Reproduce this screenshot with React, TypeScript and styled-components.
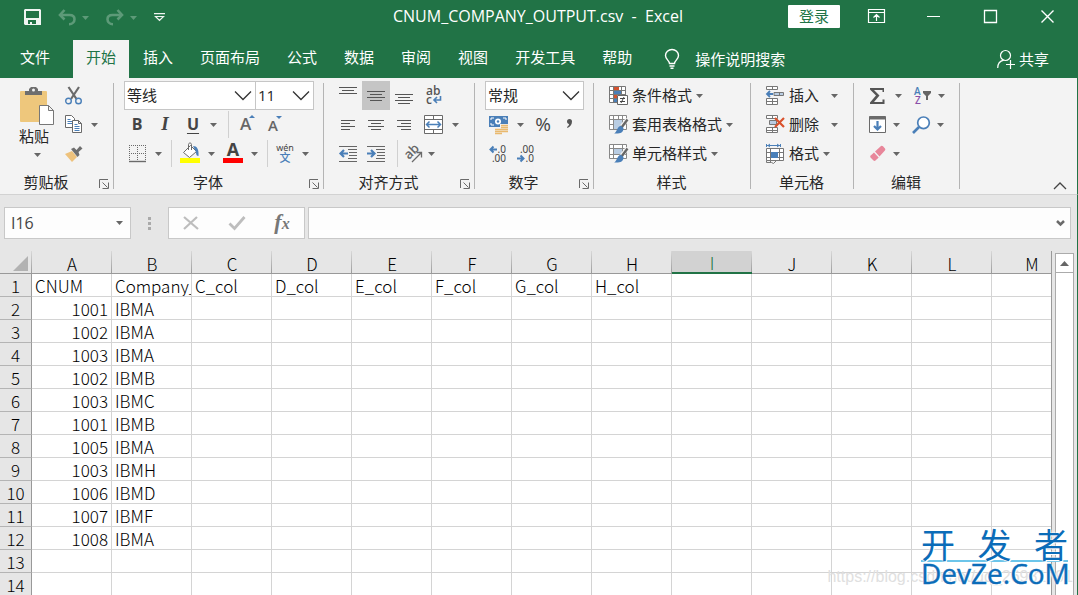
import React from "react";
import styled, { createGlobalStyle, css } from "styled-components";

const GREEN = "#217346";
const INK = "#262626";
const GREY = "#6a6a6a";
const BLUE = "#4a7fb8";

const Global = createGlobalStyle`
  * { box-sizing: border-box; }
  html, body, #root { height: 100%; }
  body {
    margin: 0;
    overflow: hidden;
    font: 15px/20px "Open Sans", "Noto Sans CJK SC", sans-serif;
    color: ${INK};
  }
  button, input, select { font: inherit; color: inherit; margin: 0; }
  button { border: 0; padding: 0; background: none; cursor: pointer; }
  svg { display: block; flex: none; overflow: visible; }
`;

const Window = styled.div`
  height: 100%;
  display: flex;
  flex-direction: column;
  background: #e6e6e6;
  overflow: hidden;
`;

/* ---------- title bar ---------- */

const TitleBar = styled.header`
  height: 40px;
  padding: 0 2px 8px 0;
  display: grid;
  grid-template-columns: 1fr auto 1fr;
  align-items: center;
  background: ${GREEN};
  color: #fff;
`;

const QuickAccess = styled.div`
  display: flex;
  align-items: center;
  gap: 17px;
  padding: 3px 0 0 24px;
`;

const QuickButton = styled.button<{ $dim?: boolean }>`
  display: flex;
  align-items: center;
  gap: 6px;
  color: ${(p) => (p.$dim ? "#5d9a78" : "#f0f5f2")};
`;

const Title = styled.h1`
  margin: 0;
  font-size: 16px;
  line-height: 32px;
  font-weight: 400;
  white-space: pre;
`;

const WindowControls = styled.div`
  display: flex;
  justify-content: flex-end;
  align-items: center;
`;

const Login = styled.button`
  width: 52px;
  height: 23px;
  margin-right: 8px;
  background: #fff;
  color: ${GREEN};
  border-radius: 1px;
  line-height: 22px;
`;

const WindowButton = styled.button`
  width: 57px;
  height: 32px;
  display: flex;
  align-items: center;
  justify-content: center;
`;

/* ---------- tabs ---------- */

const TabBar = styled.nav`
  height: 38px;
  display: flex;
  gap: 1px;
  background: ${GREEN};
  color: #fff;
`;

const Tab = styled.button<{ $active?: boolean; $file?: boolean }>`
  padding: 0 13px 4px;
  white-space: nowrap;
  ${(p) => p.$file && css`padding: 0 22px 4px 20px;`}
  ${(p) => p.$active && css`background: #f3f3f3; color: ${GREEN};`}
`;

const TabAction = styled.button<{ $end?: boolean }>`
  display: flex;
  align-items: center;
  gap: ${(p) => (p.$end ? 4 : 15)}px;
  margin-left: ${(p) => (p.$end ? "auto" : "18px")};
  margin-right: ${(p) => (p.$end ? 29 : 0)}px;
  padding-bottom: 1px;
  white-space: nowrap;
`;

/* ---------- ribbon ---------- */

const Ribbon = styled.section`
  display: flex;
  flex: none;
  height: 117px;
  background: #f3f3f3;
  border-bottom: 1px solid #d2d2d2;
  border-right: 1px solid ${GREEN};
`;

const GroupBox = styled.div<{ $width: number }>`
  width: ${(p) => p.$width}px;
  flex: none;
  display: flex;
  flex-direction: column;
  padding-top: 3px;
  background: linear-gradient(#b4b4b4, #b4b4b4) right 5px / 1px 106px no-repeat;
`;

const Rows = styled.div<{ $pad: number }>`
  padding-left: ${(p) => p.$pad}px;
`;

const Row = styled.div<{ $gap?: number; $inset?: number }>`
  height: 29px;
  display: flex;
  align-items: center;
  gap: ${(p) => p.$gap ?? 8}px;
  padding-left: ${(p) => p.$inset ?? 0}px;
`;

const Cluster = styled.div`
  display: flex;
`;

const Tool = styled.button<{ $gap?: number }>`
  height: 28px;
  display: flex;
  align-items: center;
  gap: ${(p) => p.$gap ?? 8}px;
  white-space: nowrap;
  > span { padding-bottom: 2px; }
`;

const AlignButton = styled.button<{ $on?: boolean }>`
  width: 28px;
  height: 29px;
  display: flex;
  align-items: center;
  justify-content: center;
  background: ${(p) => (p.$on ? "#c5c5c5" : "transparent")};
`;

const Letter = styled.span<{ $bold?: boolean; $italic?: boolean; $line?: boolean; $big?: boolean }>`
  width: 18px;
  text-align: center;
  color: #444;
  font-size: ${(p) => (p.$big ? 19 : 16)}px;
  font-weight: ${(p) => (p.$bold ? 700 : 400)};
  ${(p) => p.$italic && css`font-family: "Liberation Serif", serif; font-size: 19px; font-style: italic;`}
  ${(p) => p.$line && css`text-decoration: underline; text-underline-offset: 3px; text-decoration-thickness: 1px;`}
`;

const Divider = styled.span`
  width: 2px;
  height: 27px;
  border-right: 1px solid #d0d0d0;
`;

const GroupLabel = styled.div<{ $launcher?: boolean }>`
  flex: none;
  height: 28px;
  display: flex;
  align-items: center;
  padding-right: 5px;
  > span { flex: 1; text-align: center; padding-left: ${(p) => (p.$launcher ? 0 : 3)}px; }
  > button { padding: 4px 0 0 7px; }
`;

const SelectWrap = styled.label<{ $width: number }>`
  position: relative;
  width: ${(p) => p.$width}px;
  height: 29px;
  margin-right: -1px;
  display: flex;
  align-items: center;
  background: #fff;
  border: 1px solid #c6c6c6;
  select {
    appearance: none;
    width: 100%;
    border: 0;
    outline: 0;
    padding: 0 0 2px 2px;
    background: transparent;
  }
  svg { position: absolute; right: 2px; pointer-events: none; }
`;

const ClipboardBody = styled.div`
  display: flex;
  height: 87px;
  padding-left: 19px;
  gap: 10px;
`;

const PasteButton = styled.button`
  width: 36px;
  display: flex;
  flex-direction: column;
  align-items: center;
  padding-top: 6px;
  > span { padding: 0 6px 7px 0; white-space: nowrap; }
`;

const Collapse = styled.button`
  margin: auto 10px 4px auto;
`;

/* ---------- formula bar ---------- */

const FormulaBar = styled.section`
  flex: none;
  display: flex;
  height: 56px;
  padding: 12px 6px 12px 4px;
  border-right: 1px solid ${GREEN};
`;

const Field = styled.div<{ $width?: number }>`
  display: flex;
  align-items: center;
  min-width: 0;
  flex: ${(p) => (p.$width ? `0 0 ${p.$width}px` : "1")};
  background: #fdfdfd;
  border: 1px solid #c8c8c8;
  input {
    flex: 1;
    min-width: 0;
    border: 0;
    outline: 0;
    padding: 0 6px;
    background: transparent;
    color: #444;
    font-size: 16px;
  }
  > svg { margin-right: 7px; }
  > button > svg { margin-right: 5px; }
`;

const Grip = styled.div`
  width: 37px;
  display: flex;
  align-items: center;
  justify-content: center;
`;

const EntryButtons = styled.div`
  flex: 0 0 137px;
  margin-right: 3px;
  display: flex;
  align-items: center;
  justify-content: space-around;
  background: #fdfdfd;
  border: 1px solid #c8c8c8;
`;

const Fx = styled.span`
  font: italic 700 22px/24px "Liberation Serif", serif;
  color: #777;
  small { font-size: 16px; }
`;

/* ---------- sheet ---------- */

const Sheet = styled.main`
  flex: 1;
  min-height: 0;
  display: flex;
  overflow: hidden;
  border-right: 1px solid ${GREEN};
`;

const GridView = styled.div`
  flex: 1;
  min-width: 0;
  overflow: hidden;
  border-right: 1px solid #999;
`;

const Grid = styled.table`
  width: 1072px;
  table-layout: fixed;
  border-collapse: separate;
  border-spacing: 0;
  font: 300 17px/20px "Noto Sans CJK SC", sans-serif;
  color: #000;
  th, td { padding: 2px 0 0; font-weight: 300; height: 23px; overflow: hidden; white-space: nowrap; }
`;

const ColHead = styled.th<{ $on?: boolean }>`
  background: linear-gradient(#d8d8d8, #9c9c9c) right / 1px 100% no-repeat, ${(p) => (p.$on ? "#d2d2d2" : "#e6e6e6")};
  border-bottom: ${(p) => (p.$on ? `2px solid ${GREEN}` : "1px solid #999")};
  color: ${(p) => (p.$on ? GREEN : "#000")};
  line-height: 19px;
`;

const Corner = styled(ColHead)`
  width: 32px;
  svg { margin: 1px 0 0 13px; }
`;

const RowHead = styled.th`
  background: #e6e6e6;
  border-right: 1px solid #999;
  border-bottom: 1px solid #b4b4b4;
`;

const Cell = styled.td<{ $num?: boolean }>`
  background: #fff;
  border-right: 1px solid #d4d4d4;
  border-bottom: 1px solid #d4d4d4;
  text-align: ${(p) => (p.$num ? "right" : "left")};
  && { padding: 2px 3px 0; }
`;

const ScrollBar = styled.div`
  width: 25px;
  padding: 2px 3px 0;
  display: flex;
  flex-direction: column;
`;

const ScrollButton = styled.button`
  height: 20px;
  flex: none;
  display: flex;
  align-items: center;
  justify-content: center;
  background: #fff;
  border: 1px solid #ababab;
`;

const Track = styled.div`
  flex: 1;
  background: #fff;
  border: 1px solid #ababab;
  border-width: 0 1px;
`;

/* ---------- watermarks ---------- */

const SourceMark = styled.div`
  position: absolute;
  right: 5px;
  bottom: 8px;
  font: 16px/20px "Liberation Sans", sans-serif;
  color: #e0e0e0;
`;

const Brand = styled.div`
  position: absolute;
  right: 10px;
  bottom: 11px;
  width: 147px;
  color: #0b6cb8;
  text-shadow: 0 0 2px #fff, 0 0 2px #fff, 1px 1px 0 #fff;
`;

const BrandTop = styled.div`
  display: flex;
  justify-content: space-between;
  font: 400 34px/32px "Noto Sans CJK SC", sans-serif;
  border-bottom: 2px solid #6cc5ea;
  > span { height: 32px; }
`;

const BrandName = styled.div`
  font: 28px/22px "Open Sans", sans-serif;
  -webkit-text-stroke: 0.4px #0b6cb8;
`;

/* ---------- icons ---------- */

type SvgProps = { w?: number; h?: number; children: React.ReactNode; c?: string };
const Svg = ({ w = 18, h = 18, c = GREY, children }: SvgProps) => (
  <svg width={w} height={h} viewBox={`0 0 ${w} ${h}`} fill="none" stroke={c} aria-hidden="true">
    {children}
  </svg>
);

const Caret = ({ color = "#666" }: { color?: string }) => (
  <Svg w={7} h={4}>
    <path d="M0 0h7L3.5 4z" fill={color} stroke="none" />
  </Svg>
);

const Chevron = () => (
  <Svg w={20} h={12} c="#333">
    <path d="M2 1.5l8 8 8-8" strokeWidth="1.3" />
  </Svg>
);

const Launcher = () => (
  <Svg w={10} h={10}>
    <path d="M.5 9V.5H9M3.5 3.5l5 5M9.500 3.500v6h-6" />
  </Svg>
);

const SaveIcon = () => (
  <Svg w={17} h={17} c="none">
    <path fillRule="evenodd" fill="#f0f5f2" d="M1 0h15l1 1v15H1L0 15V1zM2 2v7h13V2zM4 11v4h2v-2h2v2h4V11z" />
  </Svg>
);

const UndoIcon = ({ flip }: { flip?: boolean }) => (
  <Svg w={18} h={17} c="#5d9a78">
    <g transform={flip ? "translate(18 0) scale(-1 1)" : undefined} strokeWidth="2.600">
      <path d="M2 6h9.500c3 0 5 1.600 5 4.200s-2 5-5.500 5" />
      <path d="M6.500 1l-4.500 5 4.500 4.500" />
    </g>
  </Svg>
);

const lines = (rows: [number, number, number][]) => rows.map(([x, y, w], i) => <path key={i} d={`M${x} ${y + 0.5}h${w}`} />);

const ALIGN_LINES: Record<string, [number, number, number][]> = {
  top: [[0, 1, 18], [3, 4, 12], [0, 7, 18]],
  middle: [[0, 5, 18], [3, 8, 12], [0, 11, 18], [3, 14, 12]],
  bottom: [[0, 8, 18], [3, 11, 12], [0, 14, 18], [3, 17, 12]],
  left: [[2, 5, 14], [2, 8, 9], [2, 11, 14], [2, 14, 9]],
  center: [[1, 5, 16], [4, 8, 10], [1, 11, 16], [4, 14, 10]],
  right: [[2, 5, 14], [6, 8, 10], [2, 11, 14], [6, 14, 10]],
};

const AlignIcon = ({ kind }: { kind: string }) => (
  <Svg c="#555" h={20}>{lines(ALIGN_LINES[kind])}</Svg>
);

const IndentIcon = ({ out }: { out?: boolean }) => (
  <Svg c="#666">
    {lines([[0, 1, 18], [9, 4, 9], [10, 7, 8], [10, 10, 8], [9, 13, 9], [0, 16, 18]])}
    <path d={out ? "M1 8.500h8M5 5L1.500 8.500 5 12" : "M0 8.500h8M4 5l3.500 3.500L4 12"} stroke={BLUE} strokeWidth="2.200" />
  </Svg>
);

const WrapIcon = () => (
  <Svg w={20} h={20}>
    <g fill="#555" stroke="none" fontFamily="Open Sans" fontWeight="600" fontSize="12">
      <text x="2" y="9">ab</text>
      <text x="2" y="18">c</text>
    </g>
    <path d="M16.500 10v4h-6M13 11l-3 3 3 3" stroke={BLUE} strokeWidth="1.600" />
  </Svg>
);

const MergeIcon = () => (
  <Svg w={20} h={19}>
    <path d="M.5.5h18v18H.5zM.5 4.500h18M.5 14.500h18M9.500.5v4M9.500 14.500v4" fill="#fff" />
    <path d="M3 9.500h13M5.500 6.500l-3 3 3 3M13.500 6.500l3 3-3 3" stroke={BLUE} strokeWidth="1.500" />
  </Svg>
);

const OrientIcon = () => (
  <Svg>
    <text x="0" y="0" transform="translate(5 15) rotate(-45)" fill="#666" stroke="none" fontFamily="Open Sans" fontWeight="600" fontSize="13">ab</text>
    <path d="M8 17l9-9M12.500 7.500H17.500v5" strokeWidth="1.300" />
  </Svg>
);

const PasteIcon = () => (
  <Svg w={34} h={39}>
    <rect x="0" y="4" width="27" height="31" rx="1" fill="#eec77c" stroke="none" />
    <path d="M5 8V4h4V2l2-2h5l2 2v2h4v4z" fill="#6e6e6e" stroke="none" />
    <circle cx="13.500" cy="3" r="1.500" fill="#f3f3f3" stroke="none" />
    <path d="M19.500 18.500h9l5 5v14h-14zM28.500 18.500v5h5" fill="#fff" stroke="#777" />
  </Svg>
);

const CutIcon = () => (
  <Svg>
    <path d="M3.500 0l8 12M14 0L6 12" strokeWidth="2.200" />
    <circle cx="3.500" cy="14" r="2.800" stroke={BLUE} strokeWidth="1.400" />
    <circle cx="13.500" cy="14" r="2.800" stroke={BLUE} strokeWidth="1.400" />
  </Svg>
);

const CopyIcon = () => (
  <Svg h={19}>
    <path d="M.5.5h6l3 3v9h-9z" fill="#fff" />
    <path d="M2.500 4.500h3M2.500 6.500h5M2.500 8.500h5" stroke={BLUE} />
    <path d="M7.500 5.500h6l3 3v9h-9zM13.500 5.500v3h3" fill="#fff" />
    <path d="M9.500 9.500h3M9.500 11.500h5M9.500 13.500h5M9.500 15.500h5" stroke={BLUE} />
  </Svg>
);

const BrushIcon = () => (
  <Svg>
    <path d="M0 9l7-3 5 6-5 5z" fill="#eec27c" stroke="none" />
    <path d="M6 4l3-1.500 2.500 2.500L15 1l2.500 2.500-4 3.500 1 3-2 2z" fill="#6e6e6e" stroke="none" />
  </Svg>
);

const GrowIcon = ({ down }: { down?: boolean }) => (
  <Svg w={18} h={20}>
    <text x="1" y={down ? 16 : 15} fill="#666" stroke="none" fontFamily="Open Sans" fontWeight="600" fontSize={down ? 15 : 17}>A</text>
    <path d={down ? "M9 1h6l-3 3z" : "M10 3h6l-3-3z"} fill={BLUE} stroke="none" />
  </Svg>
);

const BordersIcon = () => (
  <Svg>
    <path d="M.5 0v16M8.500 0v16M16.500 0v16M0 .5h17M0 8.500h17" strokeDasharray="1 1" />
    <path d="M0 16.500h17" strokeWidth="1.400" />
  </Svg>
);

const FillIcon = () => (
  <Svg w={20} h={21}>
    <path d="M3.500 9.500l7-7 6 6-7 6z" fill="#fff" />
    <path d="M8.500 7V1.500c0-2 3-2 3 0V7" />
    <path d="M13 3c4 0 6 3 5.500 10-1.500 0-2.500-1-2.500-4z" fill={BLUE} stroke="none" />
    <path d="M0 15h20v5H0z" fill="#ffff00" stroke="none" />
  </Svg>
);

const FontColorIcon = () => (
  <Svg w={20} h={21}>
    <text x="10" y="13" textAnchor="middle" fill="#444" stroke="none" fontFamily="Open Sans" fontWeight="700" fontSize="18">A</text>
    <path d="M0 15h20v5H0z" fill="#f00" stroke="none" />
  </Svg>
);

const PhoneticIcon = () => (
  <Svg w={18} h={20}>
    <text x="9" y="7" textAnchor="middle" fill="#444" stroke="none" fontFamily="Noto Sans" fontSize="9">wén</text>
    <text x="9" y="18" textAnchor="middle" fill={BLUE} stroke="none" fontFamily="Noto Sans CJK SC" fontWeight="500" fontSize="11">文</text>
  </Svg>
);

const MoneyIcon = () => (
  <Svg w={20} h={20}>
    <path d="M0 1h19v11H0z" fill={BLUE} stroke="none" />
    <path d="M2 5V3h3M14 3h3v2M2 8v2h3" stroke="#fff" />
    <circle cx="9" cy="6.500" r="3" fill="#fff" stroke="none" />
    <circle cx="9" cy="6.500" r="1.200" fill={BLUE} stroke="none" />
    <path d="M11 9h9v10h-9zM5 12h9v8H5z" fill="#f3f3f3" stroke="none" />
    <path d="M12 10.500h7M12 12.500h7M12 14.500h7M12 16.500h7M6 14.500h7M6 16.500h7M6 18.500h7" stroke="#e9b96e" strokeWidth="1.500" />
  </Svg>
);

const DecimalIcon = ({ less }: { less?: boolean }) => (
  <Svg w={18} h={20}>
    <g fill="#444" stroke="none" fontFamily="Noto Sans" fontSize="10" textAnchor="end">
      <text x="17" y="9">{less ? ".00" : ".0"}</text>
      <text x="17" y="18">{less ? ".0" : ".00"}</text>
    </g>
    <path d={less ? "M0 14.500h6M3.500 11.500l3 3-3 3" : "M8 5.500H2M4.500 2.500l-3 3 3 3"} stroke={BLUE} strokeWidth="2" />
  </Svg>
);

const ConditionalIcon = () => (
  <Svg w={19} h={19}>
    <path d="M.5.5h16v16H.5zM.5 4.500h16M.5 8.500h16M.5 12.500h16M4.500.5v16M12.500.5v16" fill="#fff" stroke="#777" />
    <path d="M5 1h5v3H5zM5 9h3v3H5z" fill="#d35230" stroke="none" />
    <path d="M5 5h7v3H5zM5 13h3v3H5z" fill={BLUE} stroke="none" />
    <path d="M8.500 9.500h10v9h-10z" fill="#fff" stroke="#666" />
    <path d="M11 12.500h5M11 15.500h5M15 11l-3 6" stroke="#444" />
  </Svg>
);

const TableStyleIcon = ({ cell }: { cell?: boolean }) => (
  <Svg w={19} h={19}>
    <path d={cell ? "M.5.5h17v14H.5zM.5 4.500h17M.5 10.500h17M4.500.5v14M13.500.5v14" : "M.5.5h17v14H.5zM.5 4.500h17M.5 9.500h17M4.500.5v14M9.500.5v14M13.500.5v14"} fill="#fff" stroke="#888" />
    <path d={cell ? "M5 5h8v5H5z" : "M5 5h8v9H5z"} fill="#b9cde3" stroke="none" />
    <path d="M18.500 4l-7 9" stroke="#f3f3f3" strokeWidth="4" />
    <path d="M18.500 4.500l-6 8" stroke="#666" strokeWidth="2.400" />
    <path d="M11.500 10.500l3 2.500c0 5-4 6-9.500 5.500 3-1 2.500-6 6.500-8z" fill={BLUE} stroke="none" />
  </Svg>
);

const InsertIcon = () => (
  <Svg w={19} h={19} c="#777">
    <path d="M.5.5h11v3H.5zM6.500.5v3M.5 12.500h11v6H.5zM.5 15.500h11M6.500 12.500v6" fill="#fff" />
    <path d="M8 6.500h9.500v3H8zM13.500 6.500v3" fill="#b9cde3" />
    <path d="M1 8h6M4 5L1 8l3 3" stroke={BLUE} strokeWidth="1.800" />
  </Svg>
);

const DeleteIcon = () => (
  <Svg w={19} h={19} c="#777">
    <path d="M.5.5h11v3H.5zM6.500.5v3M.5 12.500h11v5H.5zM.5 15.500h11M6.500 12.500v5" fill="#fff" />
    <path d="M3.500 5.500h7v4h-7z" fill="#b9cde3" />
    <path d="M9 3l9 9M18 3l-9 9" stroke="#d9512c" strokeWidth="2.200" />
  </Svg>
);

const FormatIcon = () => (
  <Svg w={19} h={20} c="#777">
    <path d="M.5 4.500h17v12H.5zM4.500 4.500v14M13.500 4.500v12M.5 8.500h17M.5 13.500h17" fill="#fff" />
    <path d="M5 8h7v6H5z" fill={BLUE} stroke="none" />
    <path d="M.5 0v3M14.500 0v3M1 1.500h13M4 0L2 1.500 4 3M11 0l2 1.500L11 3" stroke={BLUE} />
    <path d="M.5 16.500v2h5l2 1 3-3" />
  </Svg>
);

const SigmaIcon = () => (
  <Svg w={18} h={18}>
    <path d="M1 1h14v4h-1.500V3H5l5.500 5.500L5 15h8.500v-2.500H15.500V17H1v-1.500l6-7-6-6z" fill="#555" stroke="none" />
  </Svg>
);

const SortIcon = () => (
  <Svg w={18} h={18}>
    <g stroke="none" fontFamily="Open Sans" fontWeight="600" fontSize="10">
      <text x="0" y="8" fill={BLUE}>A</text>
      <text x="1" y="17" fill="#8a4fa8">Z</text>
    </g>
    <path d="M9 4h8v2l-3 3v4h-2V9L9 6z" fill="#666" stroke="none" />
  </Svg>
);

const FillDownIcon = () => (
  <Svg w={18} h={18}>
    <path d="M.5.5h16v16H.5z" fill="#fff" />
    <path d="M.5 2h16" strokeWidth="3" />
    <path d="M8.500 5v8M5 10l3.500 3.500L12 10" stroke={BLUE} strokeWidth="2.200" />
  </Svg>
);

const FindIcon = () => (
  <Svg w={19} h={18} c={BLUE}>
    <circle cx="11.500" cy="6.800" r="5.800" strokeWidth="1.700" fill="#fff" />
    <path d="M7 11l-6 6" strokeWidth="2.600" />
  </Svg>
);

const EraserIcon = () => (
  <Svg w={18} h={18}>
    <path d="M6 6.500L12 1q1-.7 2 .3l2 2.200q.8 1-.1 2L10.500 11.500z" fill="#e8869a" stroke="none" />
    <path d="M5 7.500l4.700 5L6.500 15.500q-1 .8-2 0L1.500 12.500q-.8-1 .2-2z" fill="#e8869a" stroke="none" />
  </Svg>
);

const BulbIcon = () => (
  <Svg w={16} h={20} c="#fff">
    <path d="M5.500 14.500c0-3-4-4-4-8a6.500 6 0 0113 0c0 4-4 5-4 8zM5.500 17h5M6.500 19.300h3" strokeWidth="1.400" />
  </Svg>
);

const ShareIcon = () => (
  <Svg w={18} h={20} c="#fff">
    <circle cx="8.500" cy="6.500" r="5" strokeWidth="1.200" />
    <path d="M.7 19c0-4 2.500-7 6-7.800M9 15.500h9M13.500 11v9" strokeWidth="1.200" />
  </Svg>
);

/* ---------- data ---------- */

const TABS = ["插入", "页面布局", "公式", "数据", "审阅", "视图", "开发工具", "帮助"];
const COLUMNS = "ABCDEFGHIJKLM".split("");
const HEADINGS = ["CNUM", "Company_", "C_col", "D_col", "E_col", "F_col", "G_col", "H_col"];
const RECORDS: [number, string][] = [
  [1001, "IBMA"], [1002, "IBMA"], [1003, "IBMA"], [1002, "IBMB"], [1003, "IBMC"], [1001, "IBMB"],
  [1005, "IBMA"], [1003, "IBMH"], [1006, "IBMD"], [1007, "IBMF"], [1008, "IBMA"],
];
const ROWS: (string | number)[][] = [HEADINGS, ...RECORDS, [], []];

type GroupProps = { label: string; width: number; pad?: number; launcher?: boolean; children: React.ReactNode };
const Group = ({ label, width, pad = 15, launcher, children }: GroupProps) => (
  <GroupBox $width={width}>
    <Rows $pad={pad}>{children}</Rows>
    <GroupLabel $launcher={launcher}>
      <span>{label}</span>
      {launcher && <button aria-label={`${label}设置`}><Launcher /></button>}
    </GroupLabel>
  </GroupBox>
);

const Picker = ({ name, value, width }: { name: string; value: string; width: number }) => (
  <SelectWrap $width={width}>
    <select aria-label={name} defaultValue={value}><option>{value}</option></select>
    <Chevron />
  </SelectWrap>
);

const IconTool = ({ name, icon, caret, gap }: { name: string; icon: React.ReactNode; caret?: boolean; gap?: number }) => (
  <Tool aria-label={name} $gap={gap}>{icon}{caret && <Caret />}</Tool>
);

const TextTool = ({ icon, text, wide }: { icon: React.ReactNode; text: string; wide?: boolean }) => (
  <Tool $gap={4}>{icon}<span>{text}{wide && "\u2002"}</span><Caret /></Tool>
);

export default function App() {
  return (
    <Window>
      <Global />
      <TitleBar>
        <QuickAccess>
          <QuickButton aria-label="保存"><SaveIcon /></QuickButton>
          <QuickButton aria-label="撤消" $dim><UndoIcon /><Caret color="#5d9a78" /></QuickButton>
          <QuickButton aria-label="恢复" $dim><UndoIcon flip /><Caret color="#5d9a78" /></QuickButton>
          <QuickButton aria-label="自定义快速访问工具栏">
            <Svg w={11} h={9} c="#f0f5f2"><path d="M0 .7h11M1.500 3.500h8l-4 4z" strokeWidth="1.200" /></Svg>
          </QuickButton>
        </QuickAccess>
        <Title>{"CNUM_COMPANY_OUTPUT.csv  -  Excel"}</Title>
        <WindowControls>
          <Login>登录</Login>
          <WindowButton aria-label="功能区显示选项">
            <Svg w={17} h={14} c="#fff"><path d="M.5.5h16v13H.5zM1 3.500h15M8.500 12V6M5.500 8.500l3-3 3 3" strokeWidth="1.200" /></Svg>
          </WindowButton>
          <WindowButton aria-label="最小化"><Svg w={13} h={13} c="#fff"><path d="M0 6.500h13" /></Svg></WindowButton>
          <WindowButton aria-label="最大化"><Svg w={13} h={13} c="#fff"><path d="M.5.5h12v12H.5z" strokeWidth="1.300" /></Svg></WindowButton>
          <WindowButton aria-label="关闭"><Svg w={13} h={13} c="#fff"><path d="M.5.5l12 12M12.500.5l-12 12" strokeWidth="1.400" /></Svg></WindowButton>
        </WindowControls>
      </TitleBar>

      <TabBar>
        <Tab $file>文件</Tab>
        <Tab $active>开始</Tab>
        {TABS.map((t) => <Tab key={t}>{t}</Tab>)}
        <TabAction><BulbIcon />操作说明搜索</TabAction>
        <TabAction $end><ShareIcon />共享</TabAction>
      </TabBar>

      <Ribbon>
        <Group label="剪贴板" width={114} pad={0} launcher>
          <ClipboardBody>
            <PasteButton><PasteIcon /><span>粘贴</span><Caret /></PasteButton>
            <div>
              <Row><IconTool name="剪切" icon={<CutIcon />} /></Row>
              <Row><IconTool name="复制" icon={<CopyIcon />} caret /></Row>
              <Row><IconTool name="格式刷" icon={<BrushIcon />} /></Row>
            </div>
          </ClipboardBody>
        </Group>

        <Group label="字体" width={210} pad={10} launcher>
          <Row $gap={0}>
            <Picker name="字体" value="等线" width={132} />
            <Picker name="字号" value="11" width={59} />
          </Row>
          <Row $gap={10} $inset={4}>
            <Tool aria-label="加粗"><Letter $bold>B</Letter></Tool>
            <Tool aria-label="倾斜"><Letter $bold $italic>I</Letter></Tool>
            <Tool aria-label="下划线"><Letter $bold $line>U</Letter><Caret /></Tool>
            <Divider />
            <IconTool name="增大字号" icon={<GrowIcon />} />
            <IconTool name="减小字号" icon={<GrowIcon down />} />
          </Row>
          <Row $inset={5}>
            <IconTool name="边框" icon={<BordersIcon />} caret />
            <Divider />
            <IconTool name="填充颜色" icon={<FillIcon />} caret />
            <IconTool name="字体颜色" icon={<FontColorIcon />} caret />
            <Divider />
            <IconTool name="拼音" icon={<PhoneticIcon />} caret />
          </Row>
        </Group>

        <Group label="对齐方式" width={151} pad={10} launcher>
          <Row $gap={6}>
            <Cluster>
              <AlignButton aria-label="顶端对齐"><AlignIcon kind="top" /></AlignButton>
              <AlignButton aria-label="垂直居中" $on><AlignIcon kind="middle" /></AlignButton>
              <AlignButton aria-label="底端对齐"><AlignIcon kind="bottom" /></AlignButton>
            </Cluster>
            <IconTool name="自动换行" icon={<WrapIcon />} />
          </Row>
          <Row $gap={6}>
            <Cluster>
              <AlignButton aria-label="左对齐"><AlignIcon kind="left" /></AlignButton>
              <AlignButton aria-label="居中"><AlignIcon kind="center" /></AlignButton>
              <AlignButton aria-label="右对齐"><AlignIcon kind="right" /></AlignButton>
            </Cluster>
            <IconTool name="合并后居中" icon={<MergeIcon />} caret />
          </Row>
          <Row $gap={6}>
            <Cluster>
              <AlignButton aria-label="减少缩进量"><IndentIcon out /></AlignButton>
              <AlignButton aria-label="增加缩进量"><IndentIcon /></AlignButton>
            </Cluster>
            <Divider />
            <IconTool name="方向" icon={<OrientIcon />} caret gap={6} />
          </Row>
        </Group>

        <Group label="数字" width={119} pad={10} launcher>
          <Row><Picker name="数字格式" value="常规" width={99} /></Row>
          <Row $gap={10} $inset={4}>
            <IconTool name="会计数字格式" icon={<MoneyIcon />} caret />
            <Tool aria-label="百分比样式"><Letter $big>%</Letter></Tool>
            <Tool aria-label="千位分隔样式">
              <Svg><path d="M5 5.500a2.500 2.500 0 015 0c0 3-1.500 5-4.500 6.500l-.5-1c1.500-1 2-2 2-3-1 0-2-1-2-2.500z" fill="#555" stroke="none" /></Svg>
            </Tool>
          </Row>
          <Row $gap={10} $inset={4}>
            <IconTool name="增加小数位数" icon={<DecimalIcon />} />
            <IconTool name="减少小数位数" icon={<DecimalIcon less />} />
          </Row>
        </Group>

        <Group label="样式" width={157}>
          <Row><TextTool icon={<ConditionalIcon />} text="条件格式" /></Row>
          <Row><TextTool icon={<TableStyleIcon />} text="套用表格格式" /></Row>
          <Row><TextTool icon={<TableStyleIcon cell />} text="单元格样式" /></Row>
        </Group>

        <Group label="单元格" width={103}>
          <Row><TextTool icon={<InsertIcon />} text="插入" wide /></Row>
          <Row><TextTool icon={<DeleteIcon />} text="删除" wide /></Row>
          <Row><TextTool icon={<FormatIcon />} text="格式" /></Row>
        </Group>

        <Group label="编辑" width={106}>
          <Row $gap={12}>
            <IconTool name="自动求和" icon={<SigmaIcon />} caret />
            <IconTool name="排序和筛选" icon={<SortIcon />} caret gap={6} />
          </Row>
          <Row $gap={12}>
            <IconTool name="填充" icon={<FillDownIcon />} caret gap={6} />
            <IconTool name="查找和选择" icon={<FindIcon />} caret gap={6} />
          </Row>
          <Row><IconTool name="清除" icon={<EraserIcon />} caret gap={6} /></Row>
        </Group>

        <Collapse aria-label="折叠功能区"><Svg w={14} h={8} c="#444"><path d="M1 7l6-6 6 6" strokeWidth="1.300" /></Svg></Collapse>
      </Ribbon>

      <FormulaBar>
        <Field $width={127}>
          <input aria-label="名称框" defaultValue="I16" />
          <Caret />
        </Field>
        <Grip><Svg w={3} h={13} c="none"><path d="M0 0h3v3H0zM0 5h3v3H0zM0 10h3v3H0z" fill="#aaa" /></Svg></Grip>
        <EntryButtons>
          <button aria-label="取消"><Svg w={16} h={14} c="#bdbdbd"><path d="M1 1l14 12M14 1L1 13" strokeWidth="2.200" /></Svg></button>
          <button aria-label="输入"><Svg w={18} h={14} c="#bdbdbd"><path d="M1.500 7.500l5 5L16.500 1" strokeWidth="2.800" /></Svg></button>
          <button aria-label="插入函数"><Fx>f<small>x</small></Fx></button>
        </EntryButtons>
        <Field>
          <input aria-label="编辑栏" />
          <button aria-label="展开编辑栏"><Svg w={9} h={7}><path d="M1 1l3.500 3.500L8 1" strokeWidth="2.500" /></Svg></button>
        </Field>
      </FormulaBar>

      <Sheet>
        <GridView>
          <Grid>
            <thead>
              <tr>
                <Corner><Svg w={15} h={15}><path d="M15 0v15H0z" fill="#b2b2b2" stroke="none" /></Svg></Corner>
                {COLUMNS.map((c) => <ColHead key={c} scope="col" $on={c === "I"}>{c}</ColHead>)}
              </tr>
            </thead>
            <tbody>
              {ROWS.map((row, r) => (
                <tr key={r}>
                  <RowHead scope="row">{r + 1}</RowHead>
                  {COLUMNS.map((c, i) => <Cell key={c} $num={typeof row[i] === "number"}>{row[i]}</Cell>)}
                </tr>
              ))}
            </tbody>
          </Grid>
        </GridView>
        <ScrollBar>
          <ScrollButton aria-label="向上滚动"><Svg w={9} h={5}><path d="M0 5h9L4.500 0z" fill="#666" stroke="none" /></Svg></ScrollButton>
          <Track />
        </ScrollBar>
      </Sheet>

      <SourceMark>https://blog.csdn.net/qq_26981791</SourceMark>
      <Brand>
        <BrandTop><span>开</span><span>发</span><span>者</span></BrandTop>
        <BrandName>DevZe.CoM</BrandName>
      </Brand>
    </Window>
  );
}
